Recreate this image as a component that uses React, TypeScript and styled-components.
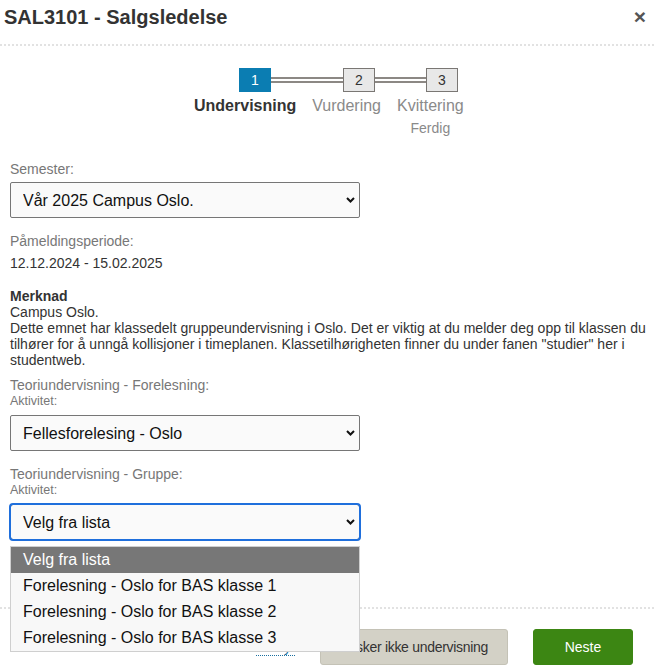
import { FC } from "react";
import styled, { createGlobalStyle } from "styled-components";

const GlobalStyle = createGlobalStyle`
  html, body {
    margin: 0;
    padding: 0;
    background: #fff;
  }
  body {
    font-family: "Liberation Sans", Arial, sans-serif;
    color: #333;
  }
  * {
    box-sizing: border-box;
  }
`;

const Modal = styled.div`
  width: 654px;
  height: 670px;
  overflow: hidden;
  display: flex;
  flex-direction: column;
  background: #fff;
`;

const Header = styled.div`
  height: 46px;
  display: flex;
  align-items: flex-start;
  justify-content: space-between;
  padding: 6px 8px 0 4px;
  border-bottom: 2px dotted #e2e2e2;
`;

const Title = styled.h1`
  margin: 0;
  font: 700 20px/22px "Liberation Sans", Arial, sans-serif;
  color: #333;
`;

const CloseButton = styled.button`
  border: 0;
  background: none;
  padding: 0;
  cursor: pointer;
  font: 700 21px/22px "Liberation Sans", Arial, sans-serif;
  color: #555;
`;

const Body = styled.div`
  padding: 0 6px 0 10px;
  display: flex;
  flex-direction: column;
`;

const Stepper = styled.div`
  margin: 22px 0 0 184px;
  display: flex;
  flex-direction: column;
`;

const BoxRow = styled.div`
  display: flex;
  align-items: center;
  margin-left: 45px;
`;

const StepBox = styled.div<{ $active?: boolean }>`
  width: 32px;
  height: 24px;
  display: flex;
  align-items: center;
  justify-content: center;
  font: 400 14px "Liberation Sans", Arial, sans-serif;
  color: ${(p) => (p.$active ? "#fff" : "#333")};
  background: ${(p) => (p.$active ? "#0b7db2" : "#e8e8e8")};
  border: 1px solid ${(p) => (p.$active ? "#0b7db2" : "#7a7774")};
`;

const Connector = styled.div<{ $width: number }>`
  width: ${(p) => p.$width}px;
  height: 6px;
  border-top: 2px solid #8c8884;
  border-bottom: 2px solid #8c8884;
`;

const LabelRow = styled.div`
  display: flex;
  gap: 16px;
  margin-top: 5px;
`;

const StepLabel = styled.div`
  display: flex;
  flex-direction: column;
  align-items: center;
`;

const StepName = styled.span<{ $active?: boolean }>`
  font: ${(p) => (p.$active ? 700 : 400)} 16px/18px "Liberation Sans", Arial,
    sans-serif;
  color: ${(p) => (p.$active ? "#333" : "#8a8a8a")};
`;

const StepSub = styled.span`
  margin-top: 5px;
  font: 400 14px/16px "Liberation Sans", Arial, sans-serif;
  color: #8a8a8a;
`;

const Label = styled.div<{ $gap?: number }>`
  margin-top: ${(p) => p.$gap ?? 0}px;
  font: 400 14px/16px "Liberation Sans", Arial, sans-serif;
  color: #777;
`;

const SubLabel = styled.div`
  font: 400 12.5px/16px "Liberation Sans", Arial, sans-serif;
  color: #777;
`;

const Value = styled.div<{ $gap?: number }>`
  margin-top: ${(p) => p.$gap ?? 0}px;
  font: 400 14px/16px "Liberation Sans", Arial, sans-serif;
  color: #333;
`;

const Note = styled.div`
  margin-top: 17px;
  font: 400 14px/16px "Liberation Sans", Arial, sans-serif;
  color: #333;
  white-space: nowrap;
`;

const NoteTitle = styled.div`
  font-weight: 700;
`;

const SelectWrap = styled.div<{ $gap?: number }>`
  position: relative;
  width: 350px;
  margin-top: ${(p) => p.$gap ?? 0}px;
`;

const Select = styled.select<{ $focused?: boolean }>`
  appearance: none;
  width: 350px;
  height: 36px;
  padding: 0 30px 0 12px;
  border: 1px solid #767676;
  border-radius: ${(p) => (p.$focused ? 3 : 2)}px;
  background: #fafafa;
  font: 400 16px "Liberation Sans", Arial, sans-serif;
  color: #111;
  outline: ${(p) => (p.$focused ? "2px solid #1f6fdc" : "none")};
  outline-offset: -1px;
`;

const Chevron = styled.svg`
  position: absolute;
  right: 5px;
  top: 15px;
  width: 9px;
  height: 6px;
  pointer-events: none;
`;

const OptionList = styled.ul`
  position: absolute;
  z-index: 10;
  left: 0;
  top: calc(100% + 6px);
  width: 350px;
  margin: 0;
  padding: 0;
  list-style: none;
  background: #f8f8f8;
  border: 1px solid #cfcfcf;
`;

const OptionItem = styled.li<{ $selected?: boolean }>`
  height: 26px;
  display: flex;
  align-items: center;
  padding-left: 12px;
  font: 400 16px "Liberation Sans", Arial, sans-serif;
  color: ${(p) => (p.$selected ? "#fff" : "#111")};
  background: ${(p) => (p.$selected ? "#777" : "transparent")};
`;

const Footer = styled.div`
  margin-top: 67px;
  border-top: 2px dotted #e2e2e2;
  padding: 20px 21px 0 0;
  display: flex;
  justify-content: flex-end;
  align-items: center;
  gap: 25px;
`;

const CancelLink = styled.a`
  font: 400 14px/16px "Liberation Sans", Arial, sans-serif;
  color: #1a6fa0;
  text-decoration: none;
  border-bottom: 1px dotted #1a6fa0;
`;

const Button = styled.button<{ $primary?: boolean }>`
  height: 36px;
  border-radius: 3px;
  font: 400 14px "Liberation Sans", Arial, sans-serif;
  cursor: pointer;
  color: ${(p) => (p.$primary ? "#fff" : "#333")};
  background: ${(p) => (p.$primary ? "#3c8613" : "#d3d1c6")};
  border: 1px solid ${(p) => (p.$primary ? "#3c8613" : "#c4c2b6")};
  padding: ${(p) => (p.$primary ? "0" : "0 20px 0 17px")};
  letter-spacing: ${(p) => (p.$primary ? "0" : "-0.3px")};
  width: ${(p) => (p.$primary ? "100px" : "188px")};
  text-align: center;
  white-space: nowrap;
`;

const ChevronIcon: FC = () => (
  <Chevron viewBox="0 0 9 6">
    <path d="M1 1l3.5 3.5L8 1" fill="none" stroke="#111" strokeWidth="2" />
  </Chevron>
);

const steps = [
  { n: 1, name: "Undervisning" },
  { n: 2, name: "Vurdering" },
  { n: 3, name: "Kvittering", sub: "Ferdig" },
];

const groupOptions = [
  "Velg fra lista",
  "Forelesning - Oslo for BAS klasse 1",
  "Forelesning - Oslo for BAS klasse 2",
  "Forelesning - Oslo for BAS klasse 3",
];

export default function App() {
  return (
    <Modal>
      <GlobalStyle />
      <Header>
        <Title>SAL3101 - Salgsledelse</Title>
        <CloseButton aria-label="Lukk">×</CloseButton>
      </Header>

      <Body>
        <Stepper>
          <BoxRow>
            <StepBox $active>1</StepBox>
            <Connector $width={72} />
            <StepBox>2</StepBox>
            <Connector $width={51} />
            <StepBox>3</StepBox>
          </BoxRow>
          <LabelRow>
            {steps.map((s) => (
              <StepLabel key={s.n}>
                <StepName $active={s.n === 1}>{s.name}</StepName>
                {s.sub && <StepSub>{s.sub}</StepSub>}
              </StepLabel>
            ))}
          </LabelRow>
        </Stepper>

        <Label $gap={25}>Semester:</Label>
        <SelectWrap $gap={5}>
          <Select defaultValue="v25">
            <option value="v25">Vår 2025 Campus Oslo.</option>
          </Select>
          <ChevronIcon />
        </SelectWrap>

        <Label $gap={15}>Påmeldingsperiode:</Label>
        <Value $gap={6}>12.12.2024 - 15.02.2025</Value>

        <Note>
          <NoteTitle>Merknad</NoteTitle>
          Campus Oslo.
          <br />
          Dette emnet har klassedelt gruppeundervisning i Oslo. Det er viktig at
          du melder deg opp til klassen du
          <br />
          tilhører for å unngå kollisjoner i timeplanen. Klassetilhørigheten
          finner du under fanen "studier" her i
          <br />
          studentweb.
        </Note>

        <Label $gap={9}>Teoriundervisning - Forelesning:</Label>
        <SubLabel>Aktivitet:</SubLabel>
        <SelectWrap $gap={6}>
          <Select defaultValue="felles">
            <option value="felles">Fellesforelesing - Oslo</option>
          </Select>
          <ChevronIcon />
        </SelectWrap>

        <Label $gap={15}>Teoriundervisning - Gruppe:</Label>
        <SubLabel>Aktivitet:</SubLabel>
        <SelectWrap $gap={6}>
          <Select $focused defaultValue="0">
            {groupOptions.map((o, i) => (
              <option key={i} value={String(i)}>
                {o}
              </option>
            ))}
          </Select>
          <ChevronIcon />
          <OptionList role="listbox">
            {groupOptions.map((o, i) => (
              <OptionItem key={i} $selected={i === 0}>
                {o}
              </OptionItem>
            ))}
          </OptionList>
        </SelectWrap>
      </Body>

      <Footer>
        <CancelLink href="#">Avbryt</CancelLink>
        <Button>Ønsker ikke undervisning</Button>
        <Button $primary>Neste</Button>
      </Footer>
    </Modal>
  );
}
